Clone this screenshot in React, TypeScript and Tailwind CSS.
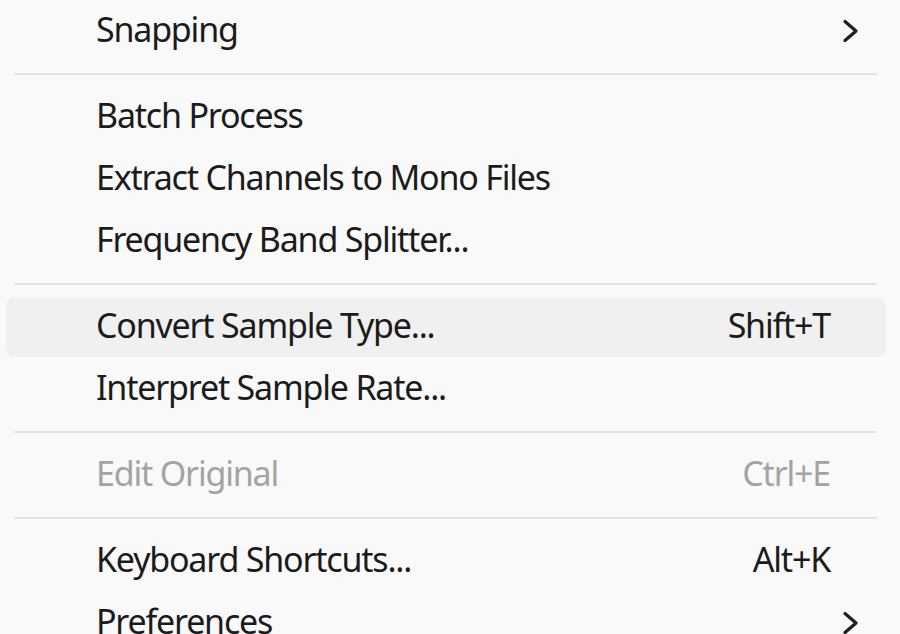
import React from 'react';

type Item =
  | { kind: 'item'; label: string; shortcut?: string; submenu?: boolean; disabled?: boolean; active?: boolean }
  | { kind: 'sep' };

const items: Item[] = [
  { kind: 'item', label: 'Snapping', submenu: true },
  { kind: 'sep' },
  { kind: 'item', label: 'Batch Process' },
  { kind: 'item', label: 'Extract Channels to Mono Files' },
  { kind: 'item', label: 'Frequency Band Splitter...' },
  { kind: 'sep' },
  { kind: 'item', label: 'Convert Sample Type...', shortcut: 'Shift+T', active: true },
  { kind: 'item', label: 'Interpret Sample Rate...' },
  { kind: 'sep' },
  { kind: 'item', label: 'Edit Original', shortcut: 'Ctrl+E', disabled: true },
  { kind: 'sep' },
  { kind: 'item', label: 'Keyboard Shortcuts...', shortcut: 'Alt+K' },
  { kind: 'item', label: 'Preferences', submenu: true },
];

const Chevron = () => (
  <svg width="20" height="28" viewBox="0 0 20 28" fill="none" stroke="#1f1f1f" strokeWidth={3.2} strokeLinecap="round" strokeLinejoin="round">
    <path d="M4 4.5L15 14L4 23.5" />
  </svg>
);

export default function App() {
  return (
    <div
      className="w-[900px] h-[634px] overflow-hidden bg-[#f9f9f9] text-[#1b1b1b]"
      style={{ fontFamily: '"Noto Sans", "Open Sans", sans-serif' }}
    >
      <div className="flex flex-col">
        {items.map((item, i) => {
          if (item.kind === 'sep') {
            return (
              <div key={i} className="h-[24px] flex items-center pl-[14px] pr-[23px]">
                <div className="h-[2px] w-full bg-[#e3e3e3]" />
              </div>
            );
          }
          return (
            <div key={i} className="h-[62px] flex items-center pl-[6px] pr-[14px]">
              <div
                className={
                  'h-[59px] w-full flex items-center rounded-[8px] pl-[90px] pr-[56px] pb-[4px] ' +
                  (item.active ? 'bg-[#f0f0f0]' : '')
                }
              >
                <span
                  className={
                    'flex-1 text-[34px] tracking-[-1.2px] leading-none ' +
                    (item.disabled ? 'text-[#a3a3a3]' : '')
                  }
                >
                  {item.label}
                </span>
                {item.shortcut && (
                  <span
                    className={
                      'text-[34px] tracking-[-1.2px] leading-none ' +
                      (item.disabled ? 'text-[#a3a3a3]' : '')
                    }
                  >
                    {item.shortcut}
                  </span>
                )}
                {item.submenu && (
                  <span className="-mr-[31px] flex items-center pt-[4px]">
                    <Chevron />
                  </span>
                )}
              </div>
            </div>
          );
        })}
      </div>
    </div>
  );
}
